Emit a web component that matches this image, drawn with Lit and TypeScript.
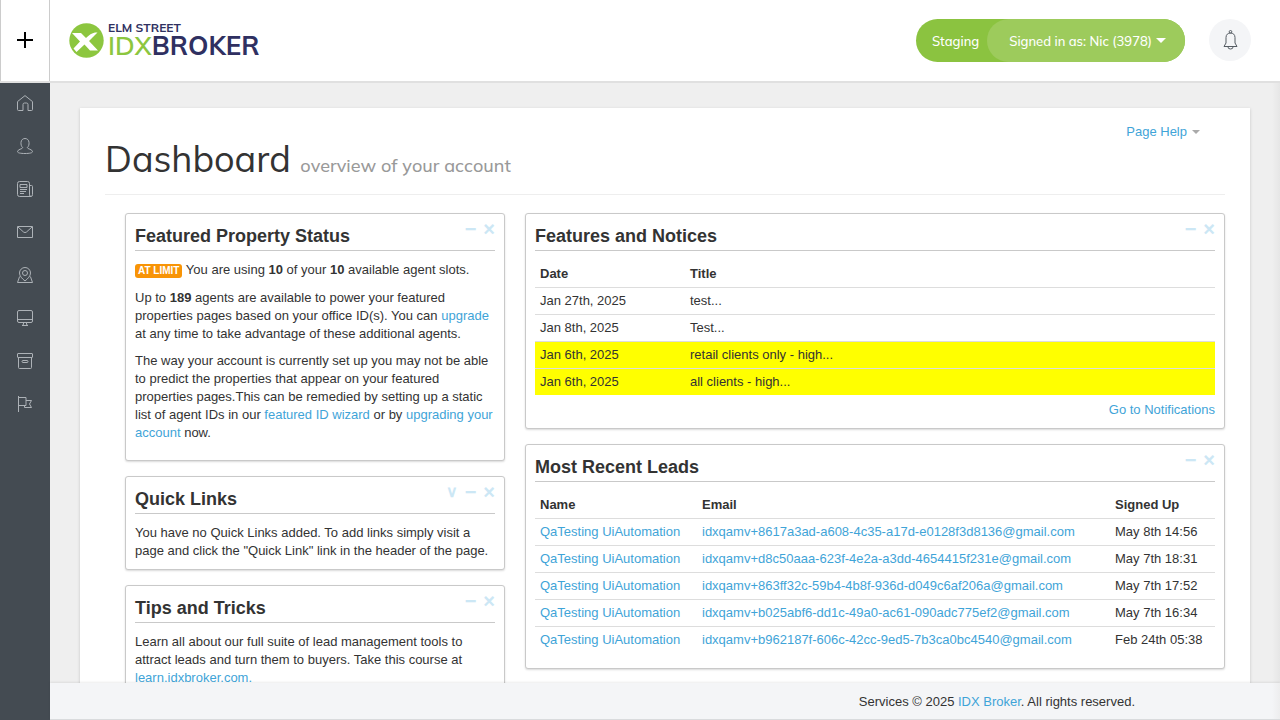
import { LitElement, html, css, svg } from "lit";
import { customElement, property } from "lit/decorators.js";

const navItems = [
  { label: "Home", icon: svg`<path d="M.5 6.600 8 .6l7.500 6v7.900q0 1-1 1h-3.500V9.500q0-1.500-1.500-1.500h-2Q6 8 6 9.500v6H1.500q-1 0-1-1z"/>` },
  { label: "Leads", icon: svg`<path d="M5.700 9.700C4.300 8.300 3.800 6.500 4 4.400 4.200 2 5.800.5 8 .5S11.800 2 12 4.400c.2 2.100-.3 3.900-1.700 5.300 0 1.300 5.200 1.500 5.200 4 0 1.200-3 1.800-7.500 1.800S.5 14.900.5 13.700c0-2.500 5.200-2.700 5.200-4z"/>` },
  { label: "Content", icon: svg`<path d="M12.500 3.500v10q0 2 1.500 2t1.500-2v-8q0-1-1-1h-2M14 15.500H2.500q-2 0-2-2v-11q0-2 2-2h8q2 0 2 2v11M3 3.500h7v3H3zM3 8.500h7M3 10.500h6M3 12.500h4"/>` },
  { label: "Email", icon: svg`<path d="M.5 2.500h15v11H.5zM1 3l5.500 5q1.500 1.200 3 0L15 3"/>` },
  { label: "Maps", icon: svg`<path d="M8 14C5 11.500 2.500 9 2.500 6a5.500 5.500 0 0 1 11 0c0 3-2.500 5.500-5.500 8zM2.600 9.500.5 15.500h15l-2.100-6"/><circle cx="8" cy="6" r="2.500"/>` },
  { label: "Design", icon: svg`<rect x=".5" y=".5" width="15" height="12" rx="1.500"/><path d="M.5 9.500h15M6.500 12.500v2L5 15.500h6l-1.500-1v-2"/>` },
  { label: "Archive", icon: svg`<rect x=".5" y=".5" width="15" height="4" rx=".5"/><path d="M1.500 4.500v10q0 1 1 1h11q1 0 1-1v-10"/><rect x="5" y="7.500" width="6" height="2" rx="1"/>` },
  { label: "Reports", icon: svg`<path d="M1.500 0v16M1.500 1.500h7.500v8H1.500M9 4.500h5.500L12.500 8l2 3.500H7.500v-2"/>` },
];

const notices = [
  { date: "Jan 27th, 2025", title: "test...", high: false },
  { date: "Jan 8th, 2025", title: "Test...", high: false },
  { date: "Jan 6th, 2025", title: "retail clients only - high...", high: true },
  { date: "Jan 6th, 2025", title: "all clients - high...", high: true },
];

const leads = [
  ["idxqamv+8617a3ad-a608-4c35-a17d-e0128f3d8136@gmail.com", "May 8th 14:56"],
  ["idxqamv+d8c50aaa-623f-4e2a-a3dd-4654415f231e@gmail.com", "May 7th 18:31"],
  ["idxqamv+863ff32c-59b4-4b8f-936d-d049c6af206a@gmail.com", "May 7th 17:52"],
  ["idxqamv+b025abf6-dd1c-49a0-ac61-090adc775ef2@gmail.com", "May 7th 16:34"],
  ["idxqamv+b962187f-606c-42cc-9ed5-7b3ca0bc4540@gmail.com", "Feb 24th 05:38"],
];

@customElement("dashboard-box")
class DashboardBox extends LitElement {
  @property() heading = "";
  @property({ type: Boolean }) movable = false;

  static styles = css`
    :host { display: block; }
    .box {
      border: 1px solid #c9c9c9;
      border-radius: 3px;
      padding: 9px;
      background: #fff;
      box-shadow: 0 1px 2px rgba(0, 0, 0, 0.15);
    }
    .head {
      display: flex;
      justify-content: space-between;
      align-items: flex-start;
      border-bottom: 1px solid #c9c9c9;
      margin-bottom: 10px;
    }
    .title { margin: 0; font-size: 18px; line-height: 27px; }
    .tools { display: flex; gap: 7px; }
    .tool {
      border: 0;
      padding: 0;
      background: none;
      color: #cce7f5;
      font: bold 20px/12px "Liberation Sans", Arial, sans-serif;
      cursor: pointer;
    }
    .down { font-size: 16px; }
  `;

  render() {
    return html`<section class="box">
      <div class="head">
        <h3 class="title">${this.heading}</h3>
        <div class="tools">
          ${this.movable ? html`<button class="tool down" aria-label="Move down">∨</button>` : ""}
          <button class="tool" aria-label="Minimize">−</button>
          <button class="tool" aria-label="Close">×</button>
        </div>
      </div>
      <slot></slot>
    </section>`;
  }
}

@customElement("app-root")
class AppRoot extends LitElement {
  static styles = css`
    :host {
      display: flex;
      flex-direction: column;
      height: 100vh;
      color: #333;
      background: #efefef;
      font: 13px/18px "Liberation Sans", Arial, sans-serif;
    }
    * { box-sizing: border-box; }
    a { color: #3fa4d8; text-decoration: none; }
    .header {
      display: flex;
      align-items: center;
      flex: none;
      height: 83px;
      background: #fff;
      border-bottom: 2px solid #e0e0e0;
    }
    .add {
      align-self: stretch;
      width: 50px;
      padding: 0 0 1px;
      border: solid #ccc;
      border-width: 0 1px;
      background: #fff;
      display: grid;
      place-items: center;
    }
    .logo { display: flex; align-items: center; gap: 4px; margin-left: 19px; color: #2f3061; }
    .words { display: flex; flex-direction: column; padding-bottom: 1px; font-family: Muli, Mulish, Lato, sans-serif; font-kerning: none; }
    .elm { font-size: 12px; line-height: 12px; font-weight: 700; }
    .idx { font-size: 26px; line-height: 24px; font-weight: 700; }
    .green { color: #8cc63f; font-weight: 600; }
    .account {
      display: flex;
      align-items: center;
      height: 43px;
      margin-left: auto;
      padding: 0 0 0 16px;
      border: 0;
      border-radius: 22px;
      background: #8bc340;
      color: #fff;
      font: 500 13px/20px Muli, Mulish, Lato, sans-serif;
      font-kerning: none;
    }
    .signed {
      display: flex;
      align-items: center;
      gap: 4px;
      height: 43px;
      margin-left: 8px;
      padding: 0 19px 0 22px;
      border-radius: 22px;
      background: #9dcb5c;
    }
    .bell {
      display: grid;
      place-items: center;
      align-self: flex-start;
      width: 42px;
      height: 42px;
      margin: 19px 29px 0 24px;
      padding: 0;
      border: 0;
      border-radius: 50%;
      background: #f4f5f7;
    }
    .line { fill: none; stroke: currentColor; stroke-width: 1; }
    .body { display: flex; flex: 1; min-height: 0; }
    .nav { flex: none; width: 50px; background: #444b52; }
    .item { display: flex; justify-content: center; height: 43px; padding-top: 12px; color: #adb2b7; }
    .content {
      flex: 1;
      min-width: 0;
      display: flex;
      flex-direction: column;
      background: linear-gradient(to left, #e6e6e6, #efefef 8px);
    }
    .main { flex: 1; min-height: 0; overflow: auto; scrollbar-width: none; padding: 25px 30px 0; }
    .panel { padding: 15px 25px 30px; background: #fff; box-shadow: 0 1px 3px rgba(0, 0, 0, 0.18); }
    .help { display: flex; justify-content: flex-end; align-items: center; gap: 5px; padding-right: 25px; }
    .caret { border: solid transparent; border-width: 4px 4px 0; border-top-color: #aaa; }
    .caret-light { border-width: 5px 5px 0; border-top-color: #fff; }
    .title {
      margin: 0 0 18px;
      padding-bottom: 10px;
      border-bottom: 1px solid #eee;
      font: 36px/36px Muli, Mulish, Lato, sans-serif;
      font-kerning: none;
    }
    .sub { font-size: 18px; font-weight: 500; color: #999; }
    .columns { display: grid; grid-template-columns: 19fr 35fr; gap: 20px; padding-left: 20px; }
    .column { display: flex; flex-direction: column; gap: 15px; min-width: 0; }
    .text { margin: 0; }
    .status { margin-bottom: 10px; }
    .spaced { margin-bottom: 9px; }
    .limit {
      display: inline-block;
      padding: 0 3px;
      border-radius: 3px;
      background: #f89406;
      color: #fff;
      font-size: 10px;
      line-height: 14px;
      font-weight: bold;
    }
    .table { width: 100%; border-spacing: 0; margin-bottom: 6px; table-layout: fixed; }
    .table th, .table td { padding: 4px 5px; text-align: left; white-space: nowrap; }
    .table td { border-top: 1px solid #ddd; }
    .high { background: #ff0; }
    .date { width: 150px; }
    .name { width: 162px; }
    .signup { width: 105px; }
    .more { text-align: right; }
    .footer {
      flex: none;
      padding: 10px 145px 8px 30px;
      border-bottom: 1px solid #d9dbdd;
      background: linear-gradient(to left, #ededee, #f4f5f7 8px);
      box-shadow: 0 -1px 2px rgba(0, 0, 0, 0.08);
      text-align: right;
    }
  `;

  render() {
    return html`
      <header class="header">
        <button class="add" aria-label="Add">
          <svg width="16" height="16" viewBox="0 0 16 16" stroke="#000" stroke-width="2"><path d="M8 0v16M0 8h16"/></svg>
        </button>
        <div class="logo">
          <svg width="35" height="35" viewBox="0 0 35 35">
            <circle cx="17.500" cy="17.500" r="17.200" fill="#8cc63f"/>
            <path fill="#fff" d="M3 10h9l5 5c3-3 6-5 9-5.500h2.500l-8.500 8.500 9 9.500h-8l-5.500-6-8 7.500-3-3.500 6.500-7z"/>
          </svg>
          <div class="words">
            <span class="elm">ELM STREET</span>
            <span class="idx"><span class="green">IDX</span>BROKER</span>
          </div>
        </div>
        <button class="account">
          <span>Staging</span>
          <span class="signed">Signed in as: Nic (3978)<i class="caret caret-light"></i></span>
        </button>
        <button class="bell" aria-label="Notifications">
          <svg class="line" width="15" height="20" viewBox="0 0 15 20" color="#555c63">
            <circle cx="7.500" cy="1.800" r="1.300"/>
            <path d="M3 13V7.500C3 4.500 5 3 7.500 3S12 4.500 12 7.500V13l2 3.500H1zM5 17q0 2 2.500 2t2.500-2"/>
          </svg>
        </button>
      </header>
      <div class="body">
        <nav class="nav">
          ${navItems.map((n) => html`<a class="item" href="#" aria-label=${n.label}>
            <svg class="line" width="16" height="16" viewBox="0 0 16 16">${n.icon}</svg></a>`)}
        </nav>
        <div class="content">
          <main class="main">
            <div class="panel">
              <div class="help"><a href="#">Page Help</a><i class="caret"></i></div>
              <h1 class="title">Dashboard <small class="sub">overview of your account</small></h1>
              <div class="columns">
                <div class="column">
                  <dashboard-box heading="Featured Property Status">
                    <p class="text status"><span class="limit">AT LIMIT</span> You are using <b>10</b> of your <b>10</b> available agent slots.</p>
                    <p class="text spaced">Up to <b>189</b> agents are available to power your featured properties pages based on your office ID(s). You can <a href="#">upgrade</a> at any time to take advantage of these additional agents.</p>
                    <p class="text spaced">The way your account is currently set up you may not be able to predict the properties that appear on your featured properties pages.This can be remedied by setting up a static list of agent IDs in our <a href="#">featured ID wizard</a> or by <a href="#">upgrading your account</a> now.</p>
                  </dashboard-box>
                  <dashboard-box heading="Quick Links" movable>
                    <p class="text">You have no Quick Links added. To add links simply visit a page and click the "Quick Link" link in the header of the page.</p>
                  </dashboard-box>
                  <dashboard-box heading="Tips and Tricks">
                    <p class="text spaced">Learn all about our full suite of lead management tools to attract leads and turn them to buyers. Take this course at <a href="#">learn.idxbroker.com.</a></p>
                  </dashboard-box>
                </div>
                <div class="column">
                  <dashboard-box heading="Features and Notices">
                    <table class="table">
                      <thead><tr><th class="date">Date</th><th>Title</th></tr></thead>
                      <tbody>
                        ${notices.map((n) => html`<tr class=${n.high ? "high" : ""}><td>${n.date}</td><td>${n.title}</td></tr>`)}
                      </tbody>
                    </table>
                    <div class="more"><a href="#">Go to Notifications</a></div>
                  </dashboard-box>
                  <dashboard-box heading="Most Recent Leads">
                    <table class="table">
                      <thead><tr><th class="name">Name</th><th>Email</th><th class="signup">Signed Up</th></tr></thead>
                      <tbody>
                        ${leads.map(([email, date]) => html`<tr><td><a href="#">QaTesting UiAutomation</a></td><td><a href="#">${email}</a></td><td>${date}</td></tr>`)}
                      </tbody>
                    </table>
                  </dashboard-box>
                </div>
              </div>
            </div>
          </main>
          <footer class="footer">Services © 2025 <a href="#">IDX Broker</a>. All rights reserved.</footer>
        </div>
      </div>
    `;
  }
}
